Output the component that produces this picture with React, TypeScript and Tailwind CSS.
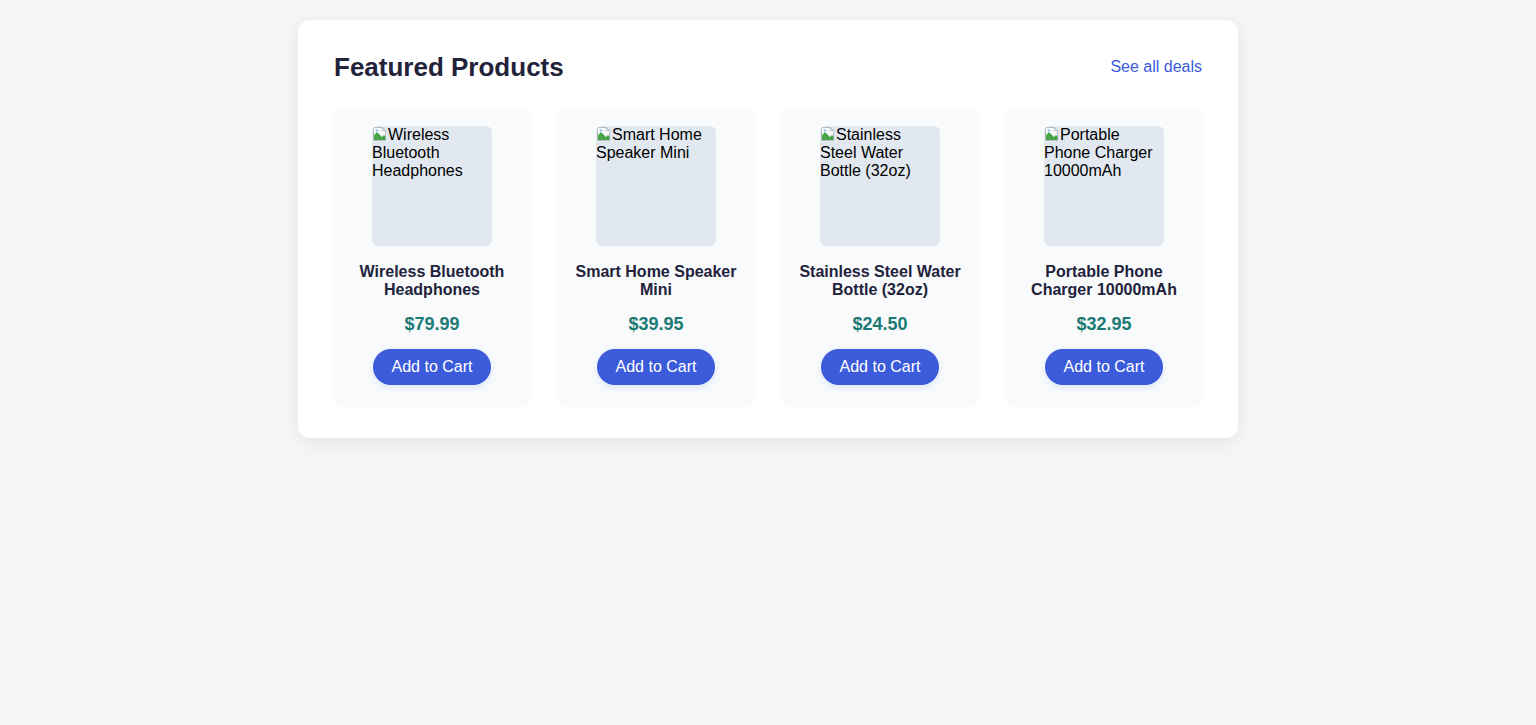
import React from "react";

type Product = {
    name: string;
    price: string;
};

const products: Product[] = [
    {name: "Wireless Bluetooth Headphones", price: "$79.99"},
    {name: "Smart Home Speaker Mini", price: "$39.95"},
    {name: "Stainless Steel Water Bottle (32oz)", price: "$24.50"},
    {name: "Portable Phone Charger 10000mAh", price: "$32.95"},
];

// stand-in for the browser's broken-image glyph
function BrokenImageIcon() {
    return (
        <svg width="16" height="16" viewBox="0 0 16 16" className="inline-block align-[-2px]">
            <path d="M1.5 1.5h9l3 3v10h-12z" fill="#f4f6f8" stroke="#b8bec6"/>
            <path d="M10.5 1.5v3h3" fill="none" stroke="#b8bec6"/>
            <path d="M2 9l3-3 5 5 2-2 1.5 1.5V14H2z" fill="#4aa54a"/>
            <circle cx="5" cy="4.5" r="1.3" fill="#9ec5e8"/>
        </svg>
    );
}

function ProductCard({product}: { product: Product }) {
    return (
        <div className="flex flex-col items-center rounded-xl bg-[#f8fafc] px-3 pt-[18px] pb-[21px] text-center shadow-[0_1px_4px_rgba(0,0,0,0.03)]">
            <div
                className="h-[120px] w-[120px] overflow-hidden rounded-md bg-[#e2e8f0] text-left font-['Liberation_Sans',Arial,sans-serif] text-[16px] leading-[18px] text-black">
                <BrokenImageIcon/>{product.name}
            </div>
            <h3 className="mt-[17px] px-1 text-[16px] font-bold leading-[18px] text-[#22223b]">{product.name}</h3>
            <p className="mt-[15px] text-[18px] font-bold leading-5 text-[#1b7a74]">{product.price}</p>
            <button
                className="mt-[15px] h-9 w-[118px] rounded-full bg-[#3b5bdb] text-[16px] text-white shadow-[0_2px_6px_rgba(59,91,219,0.15)]">
                Add to Cart
            </button>
        </div>
    );
}

export default function App() {
    return (
        <div className="min-h-screen bg-[#f4f5f7] pt-5 font-['Liberation_Sans',Arial,sans-serif]">
            <div className="mx-auto w-[940px] rounded-xl bg-white px-9 py-8 shadow-[0_4px_16px_rgba(0,0,0,0.07)]">
                <div className="flex items-center justify-between">
                    <h2 className="text-[26px] font-bold leading-[30px] text-[#22223b]">Featured Products</h2>
                    <a href="#" className="text-[16px] text-[#3b5bdb]">See all deals</a>
                </div>
                <div className="mt-[26px] grid grid-cols-4 gap-7">
                    {products.map((p) => (
                        <ProductCard key={p.name} product={p}/>
                    ))}
                </div>
            </div>
        </div>
    );
}
